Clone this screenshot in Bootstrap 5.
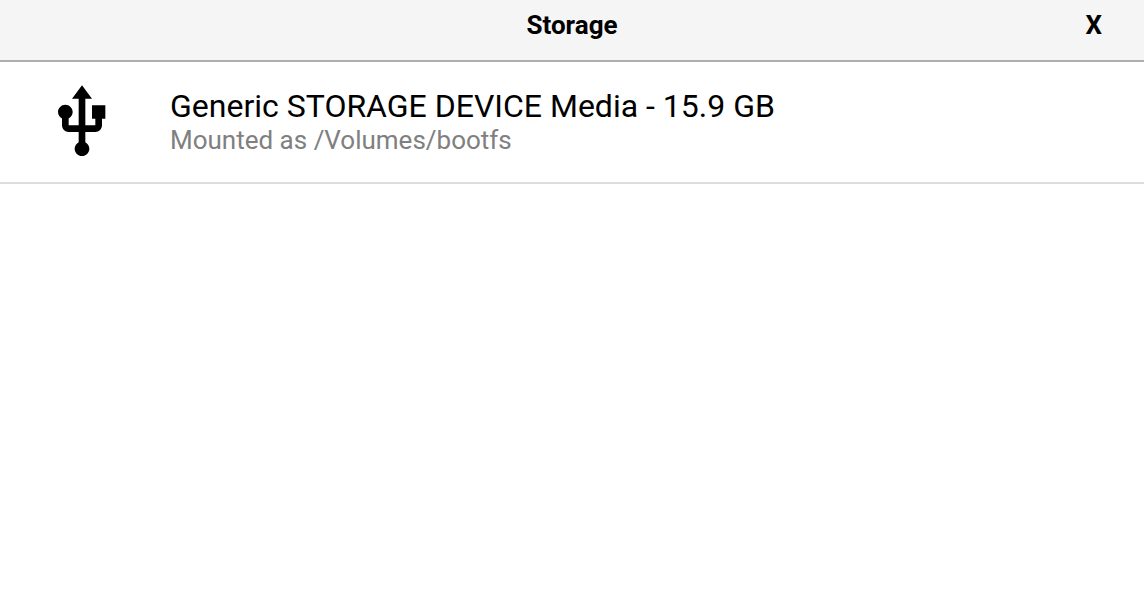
<!DOCTYPE html>
<html lang="en">
<head>
<meta charset="utf-8">
<meta name="viewport" content="width=device-width, initial-scale=1">
<title>Storage</title>
<link rel="stylesheet" href="https://cdn.jsdelivr.net/npm/bootstrap@5.3.0/dist/css/bootstrap.min.css">
<style>
body { font-family: Roboto, sans-serif; color: #000; background: #fff; }
.dialog-header { display: grid; grid-template-columns: 1fr auto 1fr; background: #f5f5f5; border-bottom: 2px solid #aeaeae; padding: 10px 42px 20px; }
.dialog-title, .dialog-close { font-size: 26px; line-height: 30px; font-weight: 700; }
.dialog-title { grid-column: 2; }
.dialog-close { color: #000; }
.drive { color: #000; border-bottom: 2px solid #dcdcdc; padding: 20px 42px; gap: 48px; }
.drive-icon { width: 80px; height: 80px; }
.drive-text { padding-top: 5px; }
.drive-name { font-size: 32px; line-height: 38px; }
.drive-mount { font-size: 26px; line-height: 30px; color: #808080; }
</style>
</head>
<body>
<header class="dialog-header">
<h1 class="dialog-title m-0">Storage</h1>
<button type="button" class="dialog-close border-0 bg-transparent p-0 ms-auto">X</button>
</header>
<main>
<ul class="list-unstyled m-0">
<li>
<a href="#" class="drive d-flex align-items-start text-decoration-none">
<svg class="drive-icon flex-shrink-0" viewBox="0 0 24 24" aria-hidden="true"><path d="M15 7v4h1v2h-3V5h2l-3-4-3 4h2v8H8v-2.070c.7-.37 1.200-1.080 1.200-1.930 0-1.210-.99-2.200-2.200-2.200-1.210 0-2.200.99-2.200 2.200 0 .85.5 1.560 1.200 1.930V13c0 1.110.89 2 2 2h3v3.050c-.71.37-1.200 1.100-1.200 1.950 0 1.220.99 2.200 2.200 2.200 1.210 0 2.200-.98 2.200-2.200 0-.85-.49-1.580-1.200-1.950V15h3c1.110 0 2-.89 2-2v-2h1V7h-4z"/></svg>
<div class="drive-text">
<div class="drive-name">Generic STORAGE DEVICE Media - 15.9 GB</div>
<div class="drive-mount">Mounted as /Volumes/bootfs</div>
</div>
</a>
</li>
</ul>
</main>
<script src="https://cdn.jsdelivr.net/npm/bootstrap@5.3.0/dist/js/bootstrap.bundle.min.js"></script>
</body>
</html>
